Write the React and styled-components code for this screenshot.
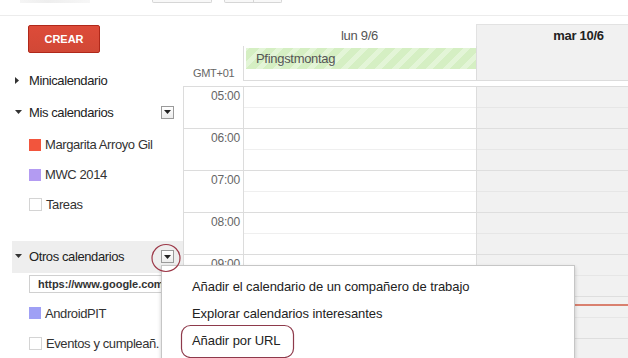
import React from "react";
import styled, { createGlobalStyle } from "styled-components";

const Global = createGlobalStyle`
  html, body { margin: 0; padding: 0; background: #fff; }
  body { font-family: "Liberation Sans", Arial, sans-serif; color: #222; }
  #root { width: 628px; height: 358px; overflow: hidden; position: relative; }
`;

const Page = styled.div`
  width: 628px;
  height: 358px;
  position: relative;
  overflow: hidden;
  background: #fff;
`;

const TopStrip = styled.div`
  height: 15px;
  border-bottom: 1px solid #ececec;
  display: flex;
  align-items: flex-start;
`;

const FaintText = styled.div`
  margin-left: 20px;
  width: 70px;
  height: 3px;
  background: linear-gradient(90deg, #f5f5f5, #eeeeee 40%, #f7f7f7);
`;

const TopBox = styled.div`
  margin-left: ${(p) => p.$ml}px;
  width: ${(p) => p.$w}px;
  height: 2px;
  border: 1px solid #d6d6d6;
  border-top: none;
  border-radius: 0 0 2px 2px;
  background: #f8f8f8;
  display: flex;
`;

const TopSeg = styled.div`
  flex: 1;
  & + & { border-left: 1px solid #d6d6d6; }
`;

const Body = styled.div`
  display: flex;
  height: 342px;
`;

const Sidebar = styled.div`
  width: 183px;
  flex: none;
  display: flex;
  flex-direction: column;
  font-size: 13px;
  letter-spacing: -0.4px;
`;

const CreateButton = styled.button`
  margin: 9px 0 0 28px;
  width: 72px;
  height: 29px;
  background: linear-gradient(#dd4b39, #d14836);
  border: 1px solid #b0281a;
  border-radius: 2px;
  color: #fff;
  font-family: "Liberation Sans", Arial, sans-serif;
  font-weight: bold;
  font-size: 11px;
  letter-spacing: 0;
  padding: 0;
`;

const SectionHeader = styled.div`
  display: flex;
  align-items: center;
  height: ${(p) => p.$h || 26}px;
  margin-top: ${(p) => p.$mt || 0}px;
  margin-left: ${(p) => (p.$active ? 12 : 0)}px;
  padding-left: ${(p) => (p.$active ? 3 : 15)}px;
  padding-right: 9px;
  background: ${(p) => (p.$active ? "#eeeeee" : "transparent")};
  color: #222;
`;

const Caret = styled.span`
  width: 11px;
  display: inline-flex;
  justify-content: flex-start;
  align-items: center;
  margin-right: 3px;
`;

const Label = styled.span`
  flex: 1;
  white-space: nowrap;
  overflow: hidden;
`;

const DropButton = styled.span`
  width: 11px;
  height: 11px;
  border: 1px solid #9a9a9a;
  background: linear-gradient(#fff, #ececec);
  display: inline-flex;
  align-items: center;
  justify-content: center;
`;

const CalList = styled.div`
  margin-top: ${(p) => p.$mt || 0}px;
  display: flex;
  flex-direction: column;
`;

const CalRow = styled.div`
  display: flex;
  align-items: center;
  height: 30px;
  padding-left: 29px;
  color: #333;
  white-space: nowrap;
  overflow: hidden;
`;

const Swatch = styled.span`
  width: ${(p) => (p.$color ? 12 : 11)}px;
  height: ${(p) => (p.$color ? 12 : 11)}px;
  flex: none;
  margin-right: 4px;
  background: ${(p) => p.$color || "#fff"};
  border: ${(p) => (p.$color ? "none" : "1px solid #d4d4d4")};
`;

const UrlInput = styled.div`
  margin: 2px 0 5px 29px;
  height: 17px;
  border: 1px solid #d0d0d0;
  border-right: none;
  padding-left: 8px;
  display: flex;
  align-items: center;
  font-size: 11px;
  font-weight: bold;
  letter-spacing: -0.05px;
  color: #333;
  white-space: nowrap;
  overflow: hidden;
`;

const Main = styled.div`
  flex: none;
  width: 497px;
  padding-top: 8px;
  display: flex;
  flex-direction: column;
`;

const HeadGrid = styled.div`
  display: grid;
  grid-template-columns: 60px 233px 204px;
  grid-template-rows: 22px 35px;
`;

const EmptyCell = styled.div``;

const DayTitle = styled.div`
  display: flex;
  align-items: center;
  justify-content: center;
  font-size: 13px;
  letter-spacing: -0.3px;
  color: ${(p) => (p.$today ? "#222" : "#555")};
  font-weight: ${(p) => (p.$today ? "bold" : "normal")};
  background: ${(p) => (p.$today ? "#f1f1f1" : "#fff")};
  border-top: ${(p) => (p.$today ? "1px solid #e2e2e2" : "none")};
  border-left: ${(p) => (p.$today ? "1px solid #e2e2e2" : "none")};
`;

const TzCell = styled.div`
  display: flex;
  align-items: flex-end;
  padding: 0 0 2px 10px;
  font-size: 11px;
  letter-spacing: -0.3px;
  color: #666;
`;

const AllDay = styled.div`
  border-left: 1px solid #dcdcdc;
  border-bottom: 1px solid #dcdcdc;
  background: ${(p) => (p.$today ? "#f1f1f1" : "#fff")};
  padding: 2px 0 0 2px;
`;

const AllDayEvent = styled.div`
  height: 21px;
  background: repeating-linear-gradient(
    -45deg,
    #d5efc3 0px,
    #d5efc3 7px,
    #e3f5d7 7px,
    #e3f5d7 12px
  );
  color: #555;
  font-size: 13px;
  letter-spacing: -0.3px;
  display: flex;
  align-items: center;
  padding-left: 10px;
`;

const TimeGrid = styled.div`
  margin-top: 5px;
  display: grid;
  grid-template-columns: 60px 233px 204px;
  border-top: 1px solid #dcdcdc;
`;

const TimeCol = styled.div`
  border-left: 1px solid #dcdcdc;
  display: flex;
  flex-direction: column;
`;

const HourLabel = styled.div`
  flex: none;
  border-bottom: 1px solid #dcdcdc;
  text-align: right;
  padding-right: 3px;
  padding-top: 2px;
  box-sizing: border-box;
  height: 42px;
  font-size: 12px;
  letter-spacing: -0.2px;
  color: #666;
`;

const DayCol = styled.div`
  position: relative;
  border-left: 1px solid #dcdcdc;
  background: ${(p) => (p.$today ? "#f1f1f1" : "#fff")};
  display: flex;
  flex-direction: column;
`;

const HourSlot = styled.div`
  height: 42px;
  flex: none;
  box-sizing: border-box;
  border-bottom: 1px solid ${(p) => (p.$today ? "#dedede" : "#dcdcdc")};
  display: flex;
  flex-direction: column;
`;

const HalfSlot = styled.div`
  height: 21px;
  flex: none;
  border-bottom: 1px solid ${(p) => (p.$today ? "#e6e6e6" : "#efefef")};
  box-sizing: border-box;
`;

const NowLine = styled.div`
  position: absolute;
  left: 0;
  right: 0;
  top: 217px;
  height: 2px;
  background: #d9806f;
`;

const Menu = styled.div`
  position: absolute;
  left: 161px;
  top: 265px;
  width: 414px;
  height: 110px;
  background: #fff;
  border: 1px solid #c6c6c6;
  box-shadow: 0 2px 4px rgba(0, 0, 0, 0.2);
  padding-top: 7px;
  box-sizing: border-box;
  display: flex;
  flex-direction: column;
`;

const MenuItem = styled.div`
  height: 27px;
  display: flex;
  align-items: center;
  padding-left: 30px;
  font-size: 13px;
  letter-spacing: -0.08px;
  color: #222;
  white-space: nowrap;
`;

const Annotation = styled.svg`
  position: absolute;
  left: 0;
  top: 0;
  pointer-events: none;
`;

const CaretRight = () => (
  <svg width="5" height="7" viewBox="0 0 5 7">
    <path d="M0 0 L4 3.5 L0 7 Z" fill="#333" />
  </svg>
);

const CaretDown = () => (
  <svg width="7" height="5" viewBox="0 0 7 5">
    <path d="M0 0 L7 0 L3.5 4 Z" fill="#333" />
  </svg>
);

const DropArrow = () => (
  <svg width="7" height="4" viewBox="0 0 7 4">
    <path d="M0 0 L7 0 L3.5 4 Z" fill="#222" />
  </svg>
);

const hours = ["05:00", "06:00", "07:00", "08:00", "09:00", "10:00", "11:00"];

export default function App() {
  return (
    <Page>
      <Global />
      <TopStrip>
        <FaintText />
        <TopBox $ml={62} $w={58}>
          <TopSeg />
        </TopBox>
        <TopBox $ml={12} $w={56}>
          <TopSeg />
          <TopSeg />
        </TopBox>
      </TopStrip>
      <Body>
        <Sidebar>
          <CreateButton>CREAR</CreateButton>
          <SectionHeader $mt={15}>
            <Caret>
              <CaretRight />
            </Caret>
            <Label>Minicalendario</Label>
          </SectionHeader>
          <SectionHeader $mt={7}>
            <Caret>
              <CaretDown />
            </Caret>
            <Label>Mis calendarios</Label>
            <DropButton>
              <DropArrow />
            </DropButton>
          </SectionHeader>
          <CalList $mt={5}>
            <CalRow>
              <Swatch $color="#f2553d" />
              Margarita Arroyo Gil
            </CalRow>
            <CalRow>
              <Swatch $color="#b39bf2" />
              MWC 2014
            </CalRow>
            <CalRow>
              <Swatch />
              Tareas
            </CalRow>
          </CalList>
          <SectionHeader $mt={21} $h={33} $active>
            <Caret>
              <CaretDown />
            </Caret>
            <Label>Otros calendarios</Label>
            <DropButton>
              <DropArrow />
            </DropButton>
          </SectionHeader>
          <UrlInput>https://www.google.com/calendar</UrlInput>
          <CalList>
            <CalRow>
              <Swatch $color="#9fa0f5" />
              AndroidPIT
            </CalRow>
            <CalRow>
              <Swatch />
              Eventos y cumpleañ.
            </CalRow>
          </CalList>
        </Sidebar>
        <Main>
          <HeadGrid>
            <EmptyCell />
            <DayTitle>lun 9/6</DayTitle>
            <DayTitle $today>mar 10/6</DayTitle>
            <TzCell>GMT+01</TzCell>
            <AllDay>
              <AllDayEvent>Pfingstmontag</AllDayEvent>
            </AllDay>
            <AllDay $today />
          </HeadGrid>
          <TimeGrid>
            <TimeCol>
              {hours.map((h) => (
                <HourLabel key={h}>{h}</HourLabel>
              ))}
            </TimeCol>
            <DayCol>
              {hours.map((h) => (
                <HourSlot key={h}>
                  <HalfSlot />
                </HourSlot>
              ))}
            </DayCol>
            <DayCol $today>
              {hours.map((h) => (
                <HourSlot key={h} $today>
                  <HalfSlot $today />
                </HourSlot>
              ))}
              <NowLine />
            </DayCol>
          </TimeGrid>
        </Main>
      </Body>
      <Menu>
        <MenuItem>Añadir el calendario de un compañero de trabajo</MenuItem>
        <MenuItem>Explorar calendarios interesantes</MenuItem>
        <MenuItem>Añadir por URL</MenuItem>
      </Menu>
      <Annotation width="628" height="358" viewBox="0 0 628 358">
        <ellipse cx="166" cy="258" rx="14" ry="13.5" fill="none" stroke="#9c3848" strokeWidth="1.2" />
        <rect x="181.5" y="325.5" width="112" height="32" rx="9" fill="none" stroke="#8e3a4b" strokeWidth="1.2" />
      </Annotation>
    </Page>
  );
}
